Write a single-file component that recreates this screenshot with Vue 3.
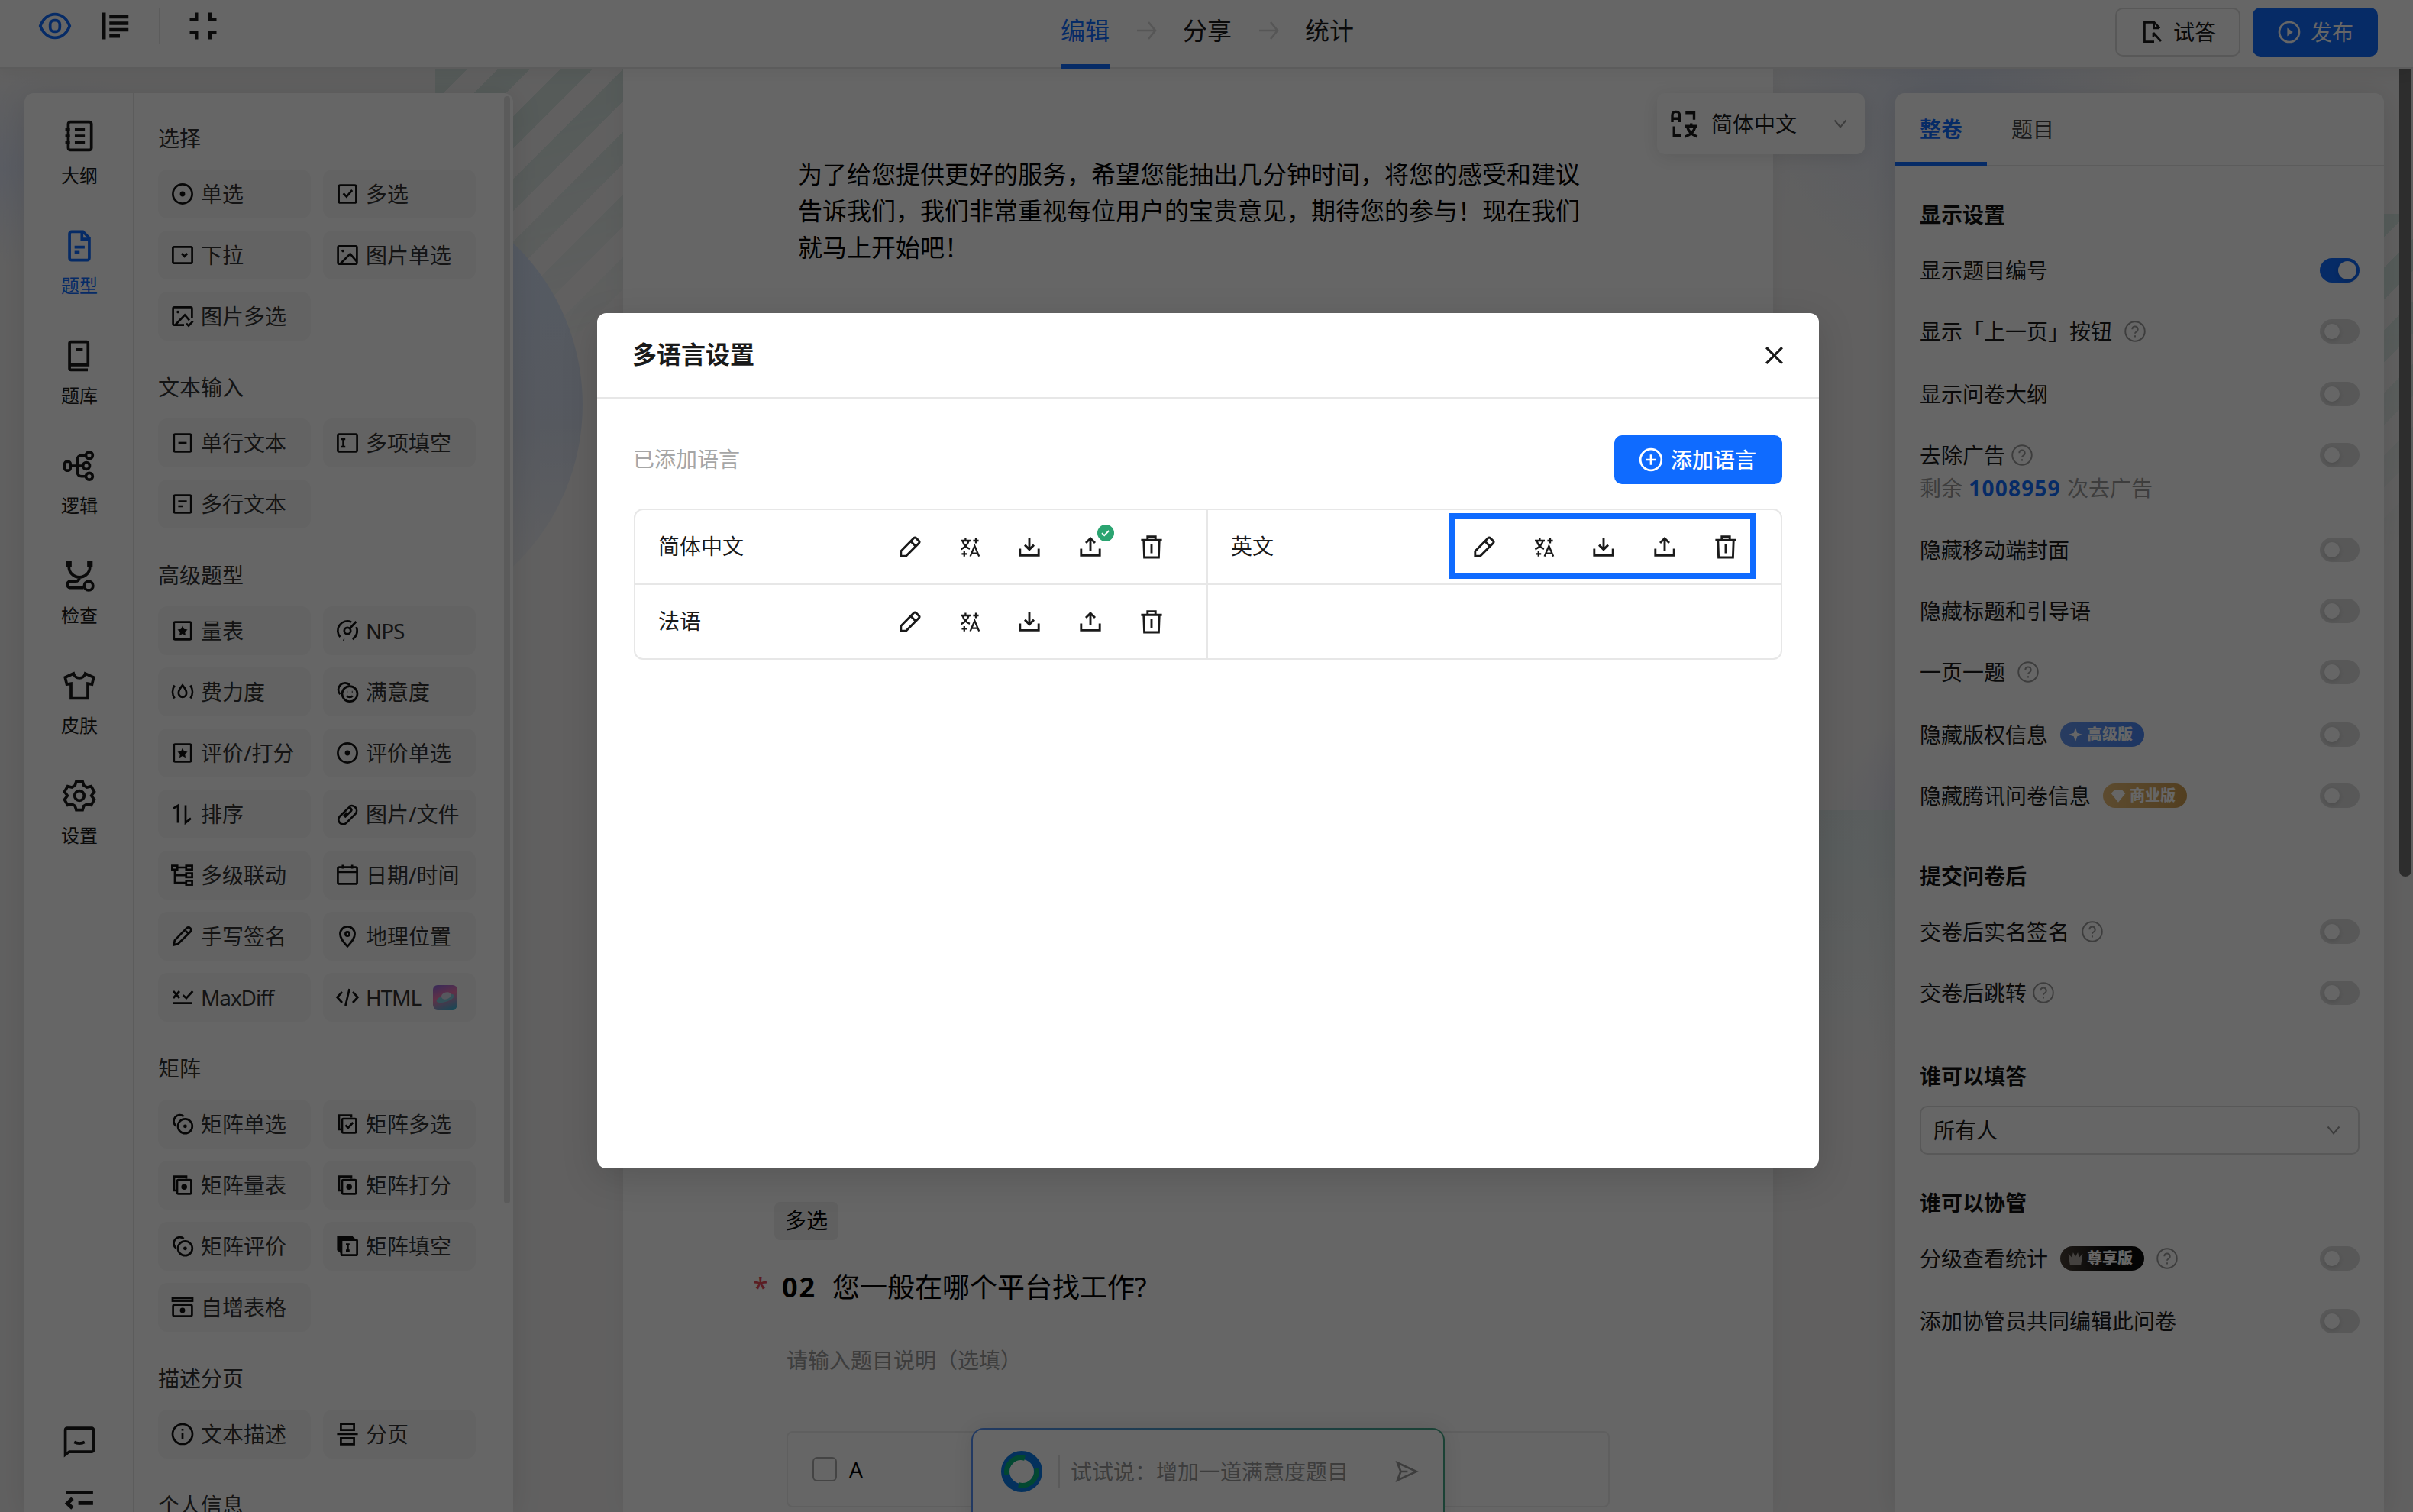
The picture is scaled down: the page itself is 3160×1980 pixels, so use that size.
<script setup>
const icons = {
  eye: '<path d="M1 8c1.300-3.400 3.900-5.600 7-5.600S13.700 4.600 15 8c-1.300 3.400-3.900 5.600-7 5.600S2.300 11.400 1 8z"/><rect x="5.700" y="5.300" width="4.600" height="5.400" rx="2"/>',
  outline: '<path d="M1.700 1v14M4.500 3.200H14.500M4.500 6.600H14.500M4.500 10H14.500M4.500 13.300h5.500"/>',
  shrink: '<path d="M1 4.500h3.500V1M15 4.500h-3.500V1M1 11.500h3.500V15M15 11.500h-3.500V15"/>',
  arrow: '<path d="M2 8h12M9.500 2.500L14 8l-4.500 5.500"/>',
  tryout: '<path d="M12.800 5.500V5L9.600 1.700H3.200v12.600h6.300M9.300 1.900v3.500h3.400M9 8.500l5 5.500M9 8.500v2.500"/>',
  play: '<circle cx="8" cy="8" r="6.500"/><path d="M6.700 5.300v5.400L10.400 8z" fill="currentColor" stroke="none"/>',
  book: '<rect x="2.700" y="1.300" width="11" height="13.400" rx="1"/><path d="M1.300 5h2.200M1.300 8h2.200M1.300 11h2.200M5.800 5h4.800M5.800 8h4.800M5.800 11h4.800"/>',
  file: '<path d="M9.700 1.200H4.300a1 1 0 0 0-1 1v11.600a1 1 0 0 0 1 1h7.400a1 1 0 0 0 1-1V4.300zM9.200 1.500v3.300h3.300M5.700 8.600h4.800M5.700 11h2.400"/>',
  bank: '<path d="M12 14.700H4a.7.700 0 0 1-.7-.7V2a.7.700 0 0 1 .7-.7h7.400a.7.700 0 0 1 .7.700v10.300H3.300M6.200 5h3.400"/>',
  logic: '<rect x="1" y="6" width="2.700" height="4.200" rx="1"/><circle cx="12.700" cy="3" r="1.600"/><circle cx="11.300" cy="8" r="1.600"/><circle cx="12.700" cy="13" r="1.600"/><path d="M3.700 8h6M11 3H9a2 2 0 0 0-2 2v6a2 2 0 0 0 2 2h2"/>',
  inspect: '<path d="M3 1.200v2.500a5 5 0 0 0 10 0V1.200M8 8.600c0 1.600-1 2-2 2H3.500A1.600 1.600 0 0 0 3.500 13.700h6.500"/><circle cx="12.400" cy="12.800" r="2.100"/><path d="M3 1v2.600M13 1v2.600" stroke-width="2.600"/>',
  shirt: '<path d="M5.200 2.200L1.200 4l.8 3.300 2-.3v7h8V7l2 .3.800-3.300-4-1.800a2.900 2.900 0 0 1-5.600 0z"/>',
  gear: '<path d="M6.500 1.200h3l.6 1.900 1.500.9 2-.5 1.500 2.600L13.700 8l1.400 1.900-1.500 2.600-2-.5-1.500.9-.6 1.900h-3l-.6-1.900-1.500-.9-2 .5-1.500-2.600L2.300 8 .9 6.100l1.500-2.600 2 .5 1.500-.9z"/><circle cx="8" cy="8" r="2.300"/>',
  chat: '<path d="M1.300 14.500V2.700a.8.800 0 0 1 .8-.8h11.800a.8.800 0 0 1 .8.800v9.600a.8.800 0 0 1-.8.800H3.200zM5.500 8.500c1.400.8 3.600.8 5 0"/>',
  fold: '<path d="M1.500 3.400h13M7.500 8.500h7M4.700 6.300L2.300 8.600l2.400 2.300M1.500 13.700h13"/>',
  radio: '<circle cx="8" cy="8" r="6.300"/><circle cx="8" cy="8" r="1.700" fill="currentColor" stroke="none"/>',
  check: '<rect x="2.300" y="2.300" width="11.400" height="11.400" rx="1"/><path d="M5.300 7.600l2.100 2.200 3.700-4.300"/>',
  select: '<rect x="1.700" y="2.700" width="12.600" height="10.600" rx=".8"/><path d="M7.500 7l1.800 1.900L11.100 7"/>',
  picture: '<rect x="1.800" y="2.200" width="12.400" height="11.600" rx=".8"/><path d="M3.500 13.500l6.300-6.300 4.200 5"/><circle cx="5" cy="5.300" r=".9" fill="currentColor" stroke="none"/>',
  pictures: '<path d="M9 13.800H2.600a.8.800 0 0 1-.8-.8V3a.8.800 0 0 1 .8-.8h10.800a.8.800 0 0 1 .8.800v6M3.500 13.500l6-6.300 3 3.500M10.500 12.800l1.500 1.500 2.800-3"/><circle cx="5" cy="5.300" r=".9" fill="currentColor" stroke="none"/>',
  line: '<rect x="2.400" y="2.300" width="11.200" height="11.400" rx=".8"/><path d="M5.300 8h5.400"/>',
  blanks: '<rect x="1.700" y="2.300" width="12.600" height="11.400" rx=".8"/><path d="M4 5.500h2.600M5.300 5.500v5M4 10.500h2.600"/>',
  lines: '<rect x="2.400" y="2.300" width="11.200" height="11.400" rx=".8"/><path d="M5.200 6.300h5.600M5.200 9.500h3"/>',
  star: '<rect x="2.400" y="2.300" width="11.200" height="11.400" rx=".8"/><path d="M8 4.800l1 2.100 2.300.3-1.700 1.600.4 2.300-2-1.100-2 1.100.4-2.300-1.700-1.600L7 6.900z" fill="currentColor" stroke="none"/>',
  gauge: '<path d="M10.500 2.200a6.300 6.300 0 0 0-7.300 9.900M5.300 13.700l.6.300M13.800 5.500a6.300 6.300 0 0 1-2.500 8M13.700 2L9.500 6.500"/><circle cx="8" cy="8" r="2.100"/>',
  effort: '<path d="M2.800 3.700c-1.700 2.600-1.700 6 0 8.600M13.200 3.700c1.700 2.600 1.700 6 0 8.600M8 3.700C6.500 5.500 5.400 7 5.400 8.800a2.600 2.600 0 0 0 5.200 0C10.600 7 9.500 5.500 8 3.700z"/>',
  smile: '<path d="M3.200 9.600A4.100 4.100 0 1 1 9.600 3.600"/><circle cx="9.500" cy="9.300" r="5"/><path d="M7.600 10.700c1 1 2.800 1 3.800 0M7.700 8h.4M10.900 8h.4"/>',
  sort: '<path d="M2 4.300L5 2.500v11.300M10 2.200v11.500l3.500-2.900"/>',
  clip: '<path d="M6.200 10.200l4-4a1.300 1.300 0 0 0-1.900-1.900L3 9.500a3 3 0 0 0 4.300 4.300l6-6a3.200 3.200 0 0 0-4.500-4.500M8 7L5.500 9.400"/>',
  tree: '<rect x="1.200" y="1.800" width="3.400" height="2.600"/><rect x="10.400" y="1.800" width="3.900" height="2.600"/><rect x="10.400" y="6.800" width="3.900" height="2.600"/><rect x="10.400" y="11.700" width="3.900" height="2.600"/><path d="M4.600 3h5.800M3 4.400V13h7.400M3 8.100h7.400"/>',
  calendar: '<rect x="1.700" y="2.800" width="12.600" height="10.900" rx="1"/><path d="M1.700 5.900h12.600M4.900 1.300v2.500M11.100 1.300v2.500"/>',
  pen: '<path d="M2.300 13.700l.6-3 7.800-8a1.400 1.400 0 0 1 2.400 2.400l-8 7.900zM10 4.500L11.700 6"/>',
  pin: '<path d="M8 14.700C5 11.500 3.200 9.300 3.200 6.500a4.800 4.800 0 0 1 9.600 0c0 2.800-1.800 5-4.800 8.200z"/><circle cx="8" cy="6.500" r="1.300"/>',
  maxdiff: '<path d="M2 4l4 4.500M6 4L2 8.500M8.300 6.600l2.200 2L14.700 4M2 11.800h12.500"/>',
  code: '<path d="M4.500 4.500L1.300 8l3.200 3.500M11.500 4.500L14.700 8l-3.200 3.500M9.300 2.500l-2.600 11"/>',
  mradio: '<path d="M3.700 9.200A3.800 3.800 0 1 1 8.800 3"/><circle cx="9.700" cy="9.400" r="4.700"/><circle cx="9.700" cy="9.400" r="1.200" fill="currentColor" stroke="none"/>',
  mcheck: '<path d="M4 11.500H2.500V2.300h8v1.400"/><rect x="4.500" y="4.500" width="9.200" height="9.200" rx=".8"/><path d="M6.700 8.700l1.700 1.800 3.200-3.500"/>',
  mstar: '<path d="M4 11.500H2.500V2.300h8v1.400"/><rect x="4.500" y="4.500" width="9.200" height="9.200" rx=".8"/><circle cx="9.100" cy="9.100" r="1.900" fill="currentColor" stroke="none"/>',
  mblank: '<path d="M1.500 1.500h9.500l2 2H4v9l-2.500-2z" fill="currentColor" stroke-width=".6"/><rect x="4" y="3.800" width="10.300" height="10" rx=".6"/><path d="M7 6.800h2.400M8.200 6.800v4M7 10.800h2.400"/>',
  grow: '<rect x="1.500" y="2" width="13" height="1.800"/><rect x="1.800" y="6.300" width="12.400" height="7.500" rx="1"/><circle cx="8" cy="10" r="1.700" fill="currentColor" stroke="none"/>',
  info: '<circle cx="8" cy="8" r="6.500"/><path d="M8 7.300v4M8 4.500v1.300"/>',
  split: '<path d="M3.700 1.300h8.600v4H3.700zM3.700 10.700h8.600v4H3.700zM1.200 8h13.600"/>',
  help: '<circle cx="8" cy="8" r="7.300"/><path d="M5.900 6.400a2.100 2.100 0 1 1 3 1.900c-.6.300-.9.600-.9 1.300M8 11v1.300"/>',
  chevron: '<path d="M3 5l5 6 5-6"/>',
  lang: '<path d="M1.600 7.200V3.400c0-2.200 3.800-2.200 3.800 0v3.800M1.600 5.300h3.800M8.500 2.300H13v3.600M2.500 9.400v4.800H6M8.300 9.300h6.400M11.500 7.800v1.500M9.400 9.600c.6 2.400 2.400 4.200 5.300 5.200M13.600 9.600c-.6 2.400-2.400 4.200-5.300 5.200"/>',
  close: '<path d="M2.300 2.300l11.400 11.400M13.700 2.300L2.300 13.700"/>',
  plus: '<circle cx="8" cy="8" r="6.900"/><path d="M8 4.600v6.800M4.600 8h6.800"/>',
  edit: '<path d="M1.900 14.100v-3.200l8.500-8.600a1 1 0 0 1 1.400 0l1.900 1.900a1 1 0 0 1 0 1.400L5.200 14.100zM8.300 4.400l3.300 3.300"/>',
  translate: '<path d="M2 4h6.500M5.200 2.200V4M7.300 4.200C6.500 7 4.800 8.500 2.200 9.700M3.300 4.200C4.100 7 5.700 8.600 8 9.400M12 2.200v3.600M10.200 4h3.600M4.400 11v3.400M2.700 12.700h3.400M8.300 14.300l2.900-6.800 2.900 6.800M9.300 12.300h3.800" stroke-width="1.150"/>',
  download: '<path d="M1.900 9.300v4.400h12.200V9.300M8 2v7.300M5 6.800L8 9.800l3-3"/>',
  upload: '<path d="M1.900 9.300v4.400h12.200V9.300M8 10.500V2.700M5 5.500l3-3 3 3"/>',
  trash: '<path d="M1.200 3.600h13.600M5.400 3.400V1.300h5.200v2.100M2.900 3.800l.4 11.200h9.400l.4-11.200M8 6.200v6"/>',
  send: '<path d="M2 2.300L14.500 8 2 13.700 4.200 8zM4.200 8h4.500"/>',
  spark: '<path d="M8 .5L9.800 6.200 15.500 8 9.800 9.800 8 15.500 6.200 9.800.5 8l5.700-1.800z" fill="currentColor" stroke="none"/>',
  gem: '<path d="M4 2h8L15.500 5.500 8 15 .5 5.500z" fill="currentColor" stroke="none"/>',
  crown: '<path d="M.5 3l3.700 4L5.500 1.500 8 6l2.500-4.500L11.800 7l3.700-4-1.700 11.500H2.200z" fill="currentColor" stroke="none"/>',
};

const sideItems = [
  { icon: 'book', label: '大纲' },
  { icon: 'file', label: '题型', active: true },
  { icon: 'bank', label: '题库' },
  { icon: 'logic', label: '逻辑' },
  { icon: 'inspect', label: '检查' },
  { icon: 'shirt', label: '皮肤' },
  { icon: 'gear', label: '设置' },
];

const groups = [
  {
    title: '选择',
    items: [['radio', '单选'], ['check', '多选'], ['select', '下拉'], ['picture', '图片单选'], ['pictures', '图片多选']],
  },
  {
    title: '文本输入',
    items: [['line', '单行文本'], ['blanks', '多项填空'], ['lines', '多行文本']],
  },
  {
    title: '高级题型',
    items: [
      ['star', '量表'], ['gauge', 'NPS'],
      ['effort', '费力度'], ['smile', '满意度'],
      ['star', '评价/打分'], ['radio', '评价单选'],
      ['sort', '排序'], ['clip', '图片/文件'],
      ['tree', '多级联动'], ['calendar', '日期/时间'],
      ['pen', '手写签名'], ['pin', '地理位置'],
      ['maxdiff', 'MaxDiff'], ['code', 'HTML'],
    ],
  },
  {
    title: '矩阵',
    items: [
      ['mradio', '矩阵单选'], ['mcheck', '矩阵多选'],
      ['mstar', '矩阵量表'], ['mstar', '矩阵打分'],
      ['mradio', '矩阵评价'], ['mblank', '矩阵填空'],
      ['grow', '自增表格'],
    ],
  },
  {
    title: '描述分页',
    items: [['info', '文本描述'], ['split', '分页']],
  },
  { title: '个人信息', items: [] },
];

const displayRows = [
  { label: '显示题目编号', on: true },
  { label: '显示「上一页」按钮', help: 'far' },
  { label: '显示问卷大纲', tall: true },
  { label: '去除广告', help: 'near', quota: '1008959' },
  { label: '隐藏移动端封面' },
  { label: '隐藏标题和引导语' },
  { label: '一页一题', help: 'far' },
  { label: '隐藏版权信息', tall: true, badge: { type: 'pro', icon: 'spark', text: '高级版' } },
  { label: '隐藏腾讯问卷信息', badge: { type: 'biz', icon: 'gem', text: '商业版' } },
];

const sections = [
  { key: 'display', title: '显示设置', rows: displayRows },
  {
    key: 'submit',
    title: '提交问卷后',
    rows: [
      { label: '交卷后实名签名', help: 'far' },
      { label: '交卷后跳转', help: 'near' },
    ],
  },
  { key: 'answer', title: '谁可以填答', select: '所有人', rows: [] },
  {
    key: 'manage',
    title: '谁可以协管',
    rows: [
      { label: '分级查看统计', help: 'far', badge: { type: 'vip', icon: 'crown', text: '尊享版' } },
      { label: '添加协管员共同编辑此问卷', tall: true },
    ],
  },
];

const languages = [
  { name: '简体中文', uploaded: true },
  { name: '英文', marked: true },
  { name: '法语' },
  { name: '' },
];
const actions = ['edit', 'translate', 'download', 'upload', 'trash'];

const isLatin = (label) => /^[A-Za-z]+$/.test(label);
</script>

<template>
  <div class="app">
    <header class="topbar">
      <div class="topbar-left">
        <svg class="icon i44 blue" viewBox="0 0 16 16" v-html="icons.eye"></svg>
        <svg class="icon i40 bold-icon" viewBox="0 0 16 16" v-html="icons.outline"></svg>
        <span class="topbar-sep"></span>
        <svg class="icon i40 bold-icon" viewBox="0 0 16 16" v-html="icons.shrink"></svg>
      </div>
      <nav class="steps">
        <span class="step active">编辑</span>
        <svg class="icon step-arrow" viewBox="0 0 16 16" v-html="icons.arrow"></svg>
        <span class="step">分享</span>
        <svg class="icon step-arrow" viewBox="0 0 16 16" v-html="icons.arrow"></svg>
        <span class="step">统计</span>
      </nav>
      <div class="topbar-right">
        <button class="btn">
          <svg class="icon i32" viewBox="0 0 16 16" v-html="icons.tryout"></svg>试答
        </button>
        <button class="btn primary">
          <svg class="icon i32" viewBox="0 0 16 16" v-html="icons.play"></svg>发布
        </button>
      </div>
    </header>

    <main class="main">
      <div class="decor glow-left"></div>
      <div class="decor stripes"></div>
      <div class="decor disc"></div>
      <div class="decor glow-top"></div>
      <div class="decor glow-mid"></div>
      <div class="decor block"></div>
      <div class="decor stripes-right"></div>

      <aside class="left-panel">
        <div class="side">
          <div v-for="s in sideItems" :key="s.label" class="side-item" :class="{ blue: s.active }">
            <svg class="icon i44" viewBox="0 0 16 16" v-html="icons[s.icon]"></svg>
            <span>{{ s.label }}</span>
          </div>
          <div class="side-foot">
            <svg class="icon i44" viewBox="0 0 16 16" v-html="icons.chat"></svg>
            <svg class="icon i44 bold-icon" viewBox="0 0 16 16" v-html="icons.fold"></svg>
          </div>
        </div>
        <div class="types">
          <section v-for="g in groups" :key="g.title" class="group">
            <h4>{{ g.title }}</h4>
            <div class="type-grid">
              <div v-for="[icon, label] in g.items" :key="label" class="type">
                <svg class="icon i32" viewBox="0 0 16 16" v-html="icons[icon]"></svg>
                <span :class="{ latin: isLatin(label) }">{{ label }}</span>
                <svg v-if="label === 'HTML'" class="html-logo" viewBox="0 0 32 32">
                  <ellipse cx="16" cy="17.500" rx="12" ry="4.500" fill="#7fc8dc" transform="rotate(-18 16 17)" />
                  <ellipse cx="17" cy="14" rx="6.500" ry="4.500" fill="#d8dcea" transform="rotate(-18 17 13)" />
                </svg>
              </div>
            </div>
          </section>
        </div>
        <div class="panel-bar"></div>
      </aside>

      <div class="paper">
        <p class="intro">为了给您提供更好的服务，希望您能抽出几分钟时间，将您的感受和建议<br>告诉我们，我们非常重视每位用户的宝贵意见，期待您的参与！现在我们<br>就马上开始吧！</p>
        <div class="question">
          <span class="q-tag">多选</span>
          <div class="q-title">
            <span class="q-star">*</span>
            <b>02</b>
            <span>您一般在哪个平台找工作?</span>
          </div>
          <div class="q-desc">请输入题目说明（选填）</div>
          <div class="q-option"><i class="checkbox"></i>A</div>
        </div>
      </div>

      <aside class="right-panel">
        <div class="tabs">
          <span class="tab active">整卷</span>
          <span class="tab">题目</span>
        </div>
        <section v-for="s in sections" :key="s.key" class="setting" :class="s.key">
          <h4>{{ s.title }}</h4>
          <div v-if="s.select" class="dropdown">
            <span>{{ s.select }}</span>
            <svg class="icon chev" viewBox="0 0 16 16" v-html="icons.chevron"></svg>
          </div>
          <template v-for="r in s.rows" :key="r.label">
            <div class="row" :class="{ tall: r.tall }">
              <span>{{ r.label }}</span>
              <span v-if="r.badge" class="badge" :class="r.badge.type">
                <svg class="icon i20" viewBox="0 0 16 16" v-html="icons[r.badge.icon]"></svg>{{ r.badge.text }}
              </span>
              <svg v-if="r.help" class="icon help" :class="r.help" viewBox="0 0 16 16" v-html="icons.help"></svg>
              <i class="switch" :class="{ on: r.on }"></i>
            </div>
            <div v-if="r.quota" class="quota">剩余 <b>{{ r.quota }}</b> 次去广告</div>
          </template>
        </section>
      </aside>

      <div class="lang-picker">
        <svg class="icon i40" viewBox="0 0 16 16" v-html="icons.lang"></svg>
        <span>简体中文</span>
        <svg class="icon chev" viewBox="0 0 16 16" v-html="icons.chevron"></svg>
      </div>

      <div class="ai-box">
        <svg class="ai-logo" viewBox="0 0 54 54">
          <circle cx="27" cy="27" r="21.500" fill="none" stroke="#0a7be8" stroke-width="11" />
          <path d="M7.500 31A19 19 0 0 1 31 9.500M46.500 23A19 19 0 0 1 23 44.500" fill="none" stroke="#06b57c" stroke-width="6.500" />
        </svg>
        <span class="ai-sep"></span>
        <span class="ai-text">试试说：增加一道满意度题目</span>
        <svg class="icon i32" viewBox="0 0 16 16" v-html="icons.send"></svg>
      </div>
      <div class="page-bar"></div>
    </main>

    <div class="mask">
      <div class="modal">
        <div class="modal-head">
          <h3>多语言设置</h3>
          <svg class="icon close" viewBox="0 0 16 16" v-html="icons.close"></svg>
        </div>
        <div class="modal-body">
          <div class="modal-tools">
            <span>已添加语言</span>
            <button class="btn primary add">
              <svg class="icon i32" viewBox="0 0 16 16" v-html="icons.plus"></svg>添加语言
            </button>
          </div>
          <div class="lang-table">
            <div v-for="(l, i) in languages" :key="i" class="lang-cell">
              <span>{{ l.name }}</span>
              <div v-if="l.name" class="actions">
                <svg v-for="a in actions" :key="a" class="icon i32" viewBox="0 0 16 16" v-html="icons[a]"></svg>
                <svg v-if="l.uploaded" class="done" viewBox="0 0 22 22">
                  <circle cx="11" cy="11" r="11" fill="#2ba471" />
                  <path d="M6 11.200l3.200 3 6-6.200" fill="none" stroke="#fff" stroke-width="1.800" />
                </svg>
                <i v-if="l.marked" class="marker"></i>
              </div>
            </div>
          </div>
        </div>
      </div>
    </div>
  </div>
</template>

<style>
body {
  margin: 0;
  overflow: hidden;
}
</style>

<style scoped>
* {
  box-sizing: border-box;
}

.app {
  position: relative;
  display: flex;
  flex-direction: column;
  width: 3160px;
  height: 1980px;
  overflow: hidden;
  background: #f2f1f1;
  color: #1a1a1a;
  font-family: "Noto Sans", "Noto Sans CJK SC", sans-serif;
  font-size: 28px;
  line-height: 40px;
}

h3,
h4,
p {
  margin: 0;
}

.icon {
  flex: none;
  display: block;
  fill: none;
  stroke: currentColor;
  stroke-width: 1.35;
}
.i20 { width: 20px; height: 20px; }
.i32 { width: 32px; height: 32px; }
.i40 { width: 40px; height: 40px; }
.i44 { width: 44px; height: 44px; }
.bold-icon { stroke-width: 1.8; }
.blue { color: #0f6bff; }

/* ── Top bar ── */
.topbar {
  position: relative;
  z-index: 3;
  flex: none;
  display: grid;
  grid-template-columns: 1fr auto 1fr;
  height: 90px;
  background: #fff;
  border-bottom: 2px solid #e7e7e7;
  box-shadow: 0 4px 20px rgba(0, 0, 0, 0.06);
}
.topbar-left {
  display: flex;
  align-items: center;
  height: 68px;
  padding-left: 50px;
}
.topbar-left .icon + .icon { margin-left: 38px; }
.topbar-sep {
  width: 2px;
  height: 46px;
  margin: 0 36px;
  background: #e7e7e7;
}
.steps {
  display: flex;
  align-items: center;
  padding-left: 2px;
  height: 90px;
  font-size: 32px;
}
.step {
  position: relative;
  height: 90px;
  line-height: 80px;
}
.step.active { color: #0f6bff; }
.step.active::after {
  content: "";
  position: absolute;
  left: 0;
  right: 0;
  bottom: 0;
  height: 6px;
  background: #0f6bff;
}
.step-arrow {
  width: 32px;
  height: 32px;
  margin: -10px 32px 0;
  color: #d8d8d8;
}
.topbar-right {
  display: flex;
  justify-content: flex-end;
  gap: 16px;
  padding: 10px 46px 0 0;
}

.btn {
  display: flex;
  align-items: center;
  gap: 12px;
  height: 64px;
  padding: 0 30px;
  border: 2px solid #dcdcdc;
  border-radius: 10px;
  background: #fff;
  color: #1a1a1a;
  font: inherit;
  white-space: nowrap;
}
.btn.primary {
  border-color: #0f6bff;
  background: #0f6bff;
  color: #fff;
}

/* ── Main area ── */
.main {
  position: relative;
  display: flex;
  height: 1890px;
}
.decor { position: absolute; }
.glow-left {
  left: 0;
  top: 0;
  width: 300px;
  height: 260px;
  background: radial-gradient(ellipse at 0 50%, #e0e6f6, transparent 70%);
}
.stripes {
  left: 570px;
  top: 0;
  width: 246px;
  height: 440px;
  background: repeating-linear-gradient(135deg, #d6e3df 0 30px, transparent 30px 58px);
  mask-image: linear-gradient(165deg, #000 20%, transparent 85%);
}
.disc {
  left: 179px;
  top: 148px;
  width: 584px;
  height: 584px;
  border-radius: 50%;
  background: linear-gradient(#d2e1f8, #d8dfee 55%, #e8eaf0 80%, #f2f1f1);
}
.glow-top {
  left: 2322px;
  top: 0;
  width: 520px;
  height: 320px;
  background: radial-gradient(ellipse at 45% 10%, #dbe2f2, transparent 68%);
}
.glow-mid {
  left: 2400px;
  top: 860px;
  width: 120px;
  height: 200px;
  background: radial-gradient(ellipse at 100% 60%, #e0e0f0, transparent 75%);
}
.block {
  left: 2322px;
  top: 971px;
  width: 200px;
  height: 330px;
  background: linear-gradient(#dfe9e9, rgba(235, 240, 238, 0));
}
.stripes-right {
  left: 3110px;
  top: 190px;
  width: 50px;
  height: 440px;
  background: repeating-linear-gradient(135deg, #d6e6e1 0 30px, transparent 30px 58px);
  mask-image: linear-gradient(#000 20%, transparent);
}

.left-panel {
  position: relative;
  display: flex;
  width: 640px;
  height: 1858px;
  margin: 32px 0 0 32px;
  border-radius: 12px 12px 0 0;
  background: #fff;
  box-shadow: 0 4px 40px rgba(0, 0, 0, 0.1);
}
.side {
  display: flex;
  flex-direction: column;
  align-items: center;
  gap: 53px;
  width: 144px;
  padding: 34px 0 0 2px;
  border-right: 2px solid #e7e7e7;
  font-size: 24px;
  line-height: 32px;
}
.side-item {
  display: flex;
  flex-direction: column;
  align-items: center;
  gap: 14px;
  margin-bottom: 1px;
}
.side-foot {
  display: flex;
  flex-direction: column;
  gap: 36px;
  margin-top: 701px;
}
.types {
  flex: 1;
  height: 1858px;
  padding: 39px 0 0 31px;
  overflow: hidden;
}
.group { margin-bottom: 41px; }
.group h4 {
  margin-bottom: 21px;
  font-weight: 400;
  color: #333;
}
.type-grid {
  display: grid;
  grid-template-columns: 200px 200px;
  gap: 16px;
}
.type {
  display: flex;
  align-items: center;
  gap: 8px;
  height: 64px;
  padding: 0 0 1px 16px;
  border-radius: 12px;
  background: #f7f7f7;
  color: #333;
  white-space: nowrap;
}
.type .icon { color: #111; }
.latin { letter-spacing: -1.1px; }
.html-logo {
  width: 32px;
  height: 32px;
  margin-left: 8px;
  border-radius: 6px;
  background: linear-gradient(160deg, #8a6ae0, #f078b0 45%, #30b8d8);
}
.panel-bar {
  position: absolute;
  right: 4px;
  top: 4px;
  width: 8px;
  height: 1450px;
  border-radius: 4px;
  background: #e3e3e3;
}

/* ── Questionnaire ── */
.paper {
  width: 1506px;
  margin-left: 144px;
  padding-top: 114px;
  background: #fff;
  box-shadow: 0 0 30px rgba(0, 0, 0, 0.05);
  z-index: 1;
}
.intro {
  margin-left: 229px;
  font-size: 32px;
  line-height: 48px;
  color: #000;
  white-space: nowrap;
}
.question {
  margin: 1226px 0 0 198px;
  color: #000;
}
.q-tag {
  display: block;
  width: 84px;
  height: 50px;
  border-radius: 8px;
  background: #f0f0f0;
  line-height: 49px;
  text-align: center;
}
.q-title {
  display: flex;
  margin: 37px 0 0 -28px;
  font-size: 36px;
  line-height: 50px;
}
.q-star {
  width: 38px;
  color: #e34d59;
}
.q-title b {
  width: 66px;
  letter-spacing: 2px;
}
.q-desc {
  margin: 50px 0 0 16px;
  color: #999;
}
.q-option {
  display: flex;
  align-items: center;
  gap: 16px;
  width: 1078px;
  height: 100px;
  margin: 73px 0 0 16px;
  padding: 0 0 1px 32px;
  border: 2px solid #ededed;
  border-radius: 8px;
}
.checkbox {
  width: 32px;
  height: 32px;
  border: 2px solid #aaa;
  border-radius: 6px;
}

.lang-picker {
  position: absolute;
  z-index: 2;
  left: 2170px;
  top: 32px;
  display: flex;
  align-items: center;
  width: 272px;
  height: 80px;
  padding: 0 20px 0 16px;
  border-radius: 10px;
  background: #fff;
  box-shadow: 0 4px 24px rgba(0, 0, 0, 0.1);
}
.lang-picker span { margin: 0 auto 0 15px; }
.chev {
  width: 24px;
  height: 24px;
  color: #999;
}

.ai-box {
  position: absolute;
  z-index: 2;
  left: 1272px;
  top: 1780px;
  display: flex;
  align-items: center;
  width: 620px;
  height: 130px;
  padding: 0 32px 16px 37px;
  border: 2px solid transparent;
  border-radius: 16px;
  background:
    linear-gradient(#fff, #fff) padding-box,
    linear-gradient(90deg, #5590f5, #45a585) border-box;
  box-shadow: 0 0 30px rgba(0, 0, 0, 0.1);
  color: #999;
  white-space: nowrap;
}
.ai-logo {
  width: 54px;
  height: 54px;
}
.ai-sep {
  width: 2px;
  height: 44px;
  margin: 0 14px 0 21px;
  background: #e0e0e0;
}
.ai-text { margin-right: auto; }
.page-bar {
  position: absolute;
  right: 2px;
  top: 0;
  width: 16px;
  height: 1058px;
  border-radius: 0 0 8px 8px;
  background: #707070;
}

/* ── Settings panel ── */
.right-panel {
  position: relative;
  width: 640px;
  height: 1858px;
  margin: 32px 0 0 160px;
  border-radius: 12px 12px 0 0;
  background: #fff;
  box-shadow: 0 4px 40px rgba(0, 0, 0, 0.1);
}
.tabs {
  display: flex;
  height: 96px;
  border-bottom: 2px solid #e7e7e7;
}
.tab {
  height: 96px;
  padding: 0 32px;
  line-height: 95px;
  color: #444;
}
.tab.active {
  border-bottom: 6px solid #0f6bff;
  color: #0f6bff;
  font-weight: 700;
}
.setting { padding: 0 32px; }
.setting h4 {
  margin-bottom: 13px;
  color: #111;
  font-weight: 700;
}
.setting.display { padding-top: 43px; }
.setting.submit { padding-top: 45px; }
.setting.answer { padding-top: 49px; }
.setting.answer h4 { margin-bottom: 19px; }
.setting.manage { padding-top: 43px; }
.row {
  display: flex;
  align-items: center;
  height: 80px;
  white-space: nowrap;
}
.row.tall {
  height: 82px;
  padding-top: 2px;
}
.help {
  width: 28px;
  height: 28px;
  color: #999;
  stroke-width: 1.1;
}
.help.far { margin-left: 16px; }
.help.near { margin-left: 8px; }
.switch {
  position: relative;
  width: 52px;
  height: 32px;
  margin-left: auto;
  border-radius: 16px;
  background: #dcdcdc;
}
.switch::after {
  content: "";
  position: absolute;
  left: 6px;
  top: 6px;
  width: 20px;
  height: 20px;
  border-radius: 50%;
  background: #fff;
  box-shadow: 0 2px 6px rgba(0, 0, 0, 0.15);
}
.switch.on { background: #0f6bff; }
.switch.on::after {
  left: 24px;
  top: 4px;
  width: 24px;
  height: 24px;
}
.quota {
  margin: -17px 0 21px;
  color: #999;
}
.quota b {
  margin: 0 1px;
  color: #0f6bff;
  letter-spacing: 1.2px;
}
.badge {
  display: flex;
  align-items: center;
  gap: 5px;
  width: 110px;
  height: 32px;
  margin-left: 16px;
  padding-left: 10px;
  border-radius: 16px;
  color: #fff;
  font-size: 20px;
  font-weight: 900;
  line-height: 32px;
}
.badge.pro { background: linear-gradient(90deg, #6496f0, #4a86f5); }
.badge.biz { background: linear-gradient(90deg, #e6bb76, #cd9c50); }
.badge.vip { background: linear-gradient(90deg, #4a4038, #0c0c0c 60%); }
.badge.vip .icon { color: #aaa49e; }
.dropdown {
  display: flex;
  align-items: center;
  justify-content: space-between;
  height: 64px;
  padding: 0 20px 0 16px;
  border: 2px solid #dcdcdc;
  border-radius: 10px;
}

/* ── Language dialog ── */
.mask {
  position: absolute;
  inset: 0;
  z-index: 10;
  background: rgba(0, 0, 0, 0.6);
}
.modal {
  width: 1600px;
  height: 1120px;
  margin: 410px 0 0 782px;
  border-radius: 12px;
  background: #fff;
  box-shadow: 0 12px 48px rgba(0, 0, 0, 0.15);
}
.modal-head {
  display: flex;
  align-items: center;
  justify-content: space-between;
  height: 112px;
  padding: 0 44px 2px 46px;
  border-bottom: 2px solid #e7e7e7;
}
.modal-head h3 {
  font-size: 32px;
  font-weight: 700;
}
.close {
  width: 29px;
  height: 29px;
  margin-top: 2px;
  stroke-width: 1.8;
}
.modal-body { padding: 48px; }
.modal-tools {
  display: flex;
  align-items: center;
  justify-content: space-between;
  margin-bottom: 32px;
  color: #a6a6a6;
}
.modal-tools > span { margin: -2px 0 0 -1px; }
.btn.add {
  gap: 10px;
  width: 220px;
  font-weight: 500;
}
.lang-table {
  display: grid;
  grid-template-columns: 748px 1fr;
  gap: 2px;
  border: 2px solid #e7e7e7;
  border-radius: 12px;
  background: #e7e7e7;
  overflow: hidden;
}
.lang-cell {
  display: flex;
  align-items: center;
  justify-content: space-between;
  height: 96px;
  padding: 0 56px 0 30px;
  background: #fff;
}
.lang-cell > span { margin-top: -2px; }
.actions {
  position: relative;
  display: flex;
  gap: 46px;
}
.actions .icon { stroke-width: 1.45; }
.actions .icon:nth-child(n + 4) { margin-left: 2px; }
.done {
  position: absolute;
  left: 261px;
  top: -13px;
  width: 22px;
  height: 22px;
}
.marker {
  position: absolute;
  left: -30px;
  top: -28px;
  width: 402px;
  height: 86px;
  border: 8px solid #0f6bff;
}
</style>
